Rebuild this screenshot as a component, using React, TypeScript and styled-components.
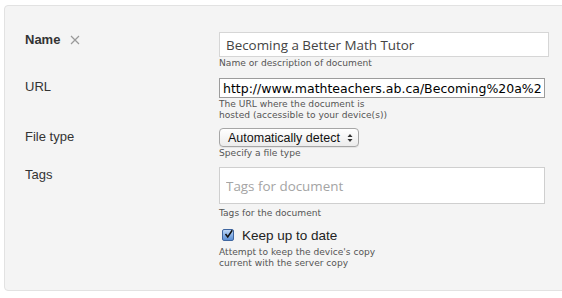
import styled, { createGlobalStyle } from 'styled-components'

const GlobalStyle = createGlobalStyle`
  html, body {
    margin: 0;
    padding: 0;
    background: #ffffff;
    overflow: hidden;
  }
`

const Panel = styled.div`
  margin: 5px 0 0 4px;
  width: 600px;
  height: 286px;
  box-sizing: border-box;
  padding: 26px 0 0 20px;
  background: #f4f4f4;
  border: 1px solid #e2e2e2;
  border-radius: 4px;
  font-family: 'Liberation Sans', Arial, sans-serif;
`

const Row = styled.div<{ $gap?: number }>`
  display: grid;
  grid-template-columns: 194px 330px;
  margin-bottom: ${(p) => p.$gap ?? 8}px;
`

const Label = styled.div<{ $bold?: boolean }>`
  display: flex;
  align-items: center;
  gap: 10px;
  height: 16px;
  font-size: 13px;
  line-height: 16px;
  color: #333;
  font-weight: ${(p) => (p.$bold ? 700 : 400)};
`

const Field = styled.div`
  display: flex;
  flex-direction: column;
  align-items: flex-start;
`

const TextInput = styled.input<{ $height: number; $mono?: boolean; $border: string }>`
  box-sizing: border-box;
  width: 100%;
  height: ${(p) => p.$height}px;
  margin: 0;
  padding: 0 6px;
  background: #fff;
  border: 1px solid ${(p) => p.$border};
  border-radius: 0;
  outline: none;
  font-family: ${(p) => (p.$mono ? "'DejaVu Sans', Verdana, sans-serif" : "'Open Sans', sans-serif")};
  font-size: ${(p) => (p.$mono ? '12.5px' : '13.4px')};
  color: ${(p) => (p.$mono ? '#000' : '#444')};
  &::placeholder {
    color: #a4a4a4;
  }
`

const Help = styled.div`
  font-family: 'DejaVu Sans', Verdana, sans-serif;
  font-size: 9.1px;
  line-height: 11px;
  color: #555;
  margin-top: 1px;
  white-space: nowrap;
`

const SelectBox = styled.div`
  box-sizing: border-box;
  width: 140px;
  height: 19px;
  display: flex;
  align-items: center;
  justify-content: space-between;
  padding: 0 5px 0 8px;
  border: 1px solid #a6a6a6;
  border-radius: 4px;
  background: linear-gradient(#ffffff, #ececec);
  box-shadow: 0 1px 0 rgba(0, 0, 0, 0.06);
  font-size: 12.5px;
  color: #111;
`

const CheckRow = styled.div`
  display: flex;
  align-items: center;
  gap: 8px;
  padding-left: 3px;
  height: 16px;
  font-size: 13.5px;
  color: #222;
`

const Box = styled.span`
  width: 12px;
  height: 12px;
  box-sizing: border-box;
  border: 1px solid #3f66a0;
  border-radius: 2px;
  background: linear-gradient(#bcd6f6, #5b8fd6);
  display: flex;
  align-items: center;
  justify-content: center;
`

const Arrows = () => (
  <svg width="6" height="10" viewBox="0 0 6 10">
    <path d="M3 1 L5.5 4 H0.5 Z M3 9 L5.5 6 H0.5 Z" fill="#333" />
  </svg>
)

const Cross = () => (
  <svg width="10" height="10" viewBox="0 0 10 10">
    <path d="M1 1 L9 9 M9 1 L1 9" stroke="#9a9a9a" strokeWidth="1.2" />
  </svg>
)

const Tick = () => (
  <svg width="12" height="12" viewBox="0 0 12 12" style={{ marginTop: -3, marginLeft: 1 }}>
    <path d="M2 6 L5 10 L11 1" stroke="#111" strokeWidth="2" fill="none" />
  </svg>
)

export default function App() {
  return (
    <>
      <GlobalStyle />
      <Panel>
        <Row $gap={9}>
          <Label $bold>
            Name <Cross />
          </Label>
          <Field>
            <TextInput $height={25} $border="#d6d6d6" defaultValue="Becoming a Better Math Tutor" />
            <Help>Name or description of document</Help>
          </Field>
        </Row>
        <Row $gap={7}>
          <Label style={{ marginTop: 1 }}>URL</Label>
          <Field>
            <TextInput
              $height={20}
              $mono
              $border="#9c9c9c"
              style={{ width: 326, padding: '0 3px' }}
              defaultValue="http://www.mathteachers.ab.ca/Becoming%20a%20Better%20Math%20Tutor.pdf"
            />
            <Help>
              The URL where the document is
              <br />
              hosted (accessible to your device(s))
            </Help>
          </Field>
        </Row>
        <Row $gap={8}>
          <Label style={{ marginTop: 1 }}>File type</Label>
          <Field>
            <SelectBox>
              Automatically detect <Arrows />
            </SelectBox>
            <Help>Specify a file type</Help>
          </Field>
        </Row>
        <Row $gap={8}>
          <Label>Tags</Label>
          <Field>
            <TextInput $height={37} $border="#cfcfcf" style={{ width: 326 }} placeholder="Tags for document" />
            <Help style={{ marginTop: 4 }}>Tags for the document</Help>
          </Field>
        </Row>
        <Row>
          <div />
          <Field>
            <CheckRow>
              <Box>
                <Tick />
              </Box>
              Keep up to date
            </CheckRow>
            <Help style={{ marginTop: 4 }}>
              Attempt to keep the device's copy
              <br />
              current with the server copy
            </Help>
          </Field>
        </Row>
      </Panel>
    </>
  )
}
